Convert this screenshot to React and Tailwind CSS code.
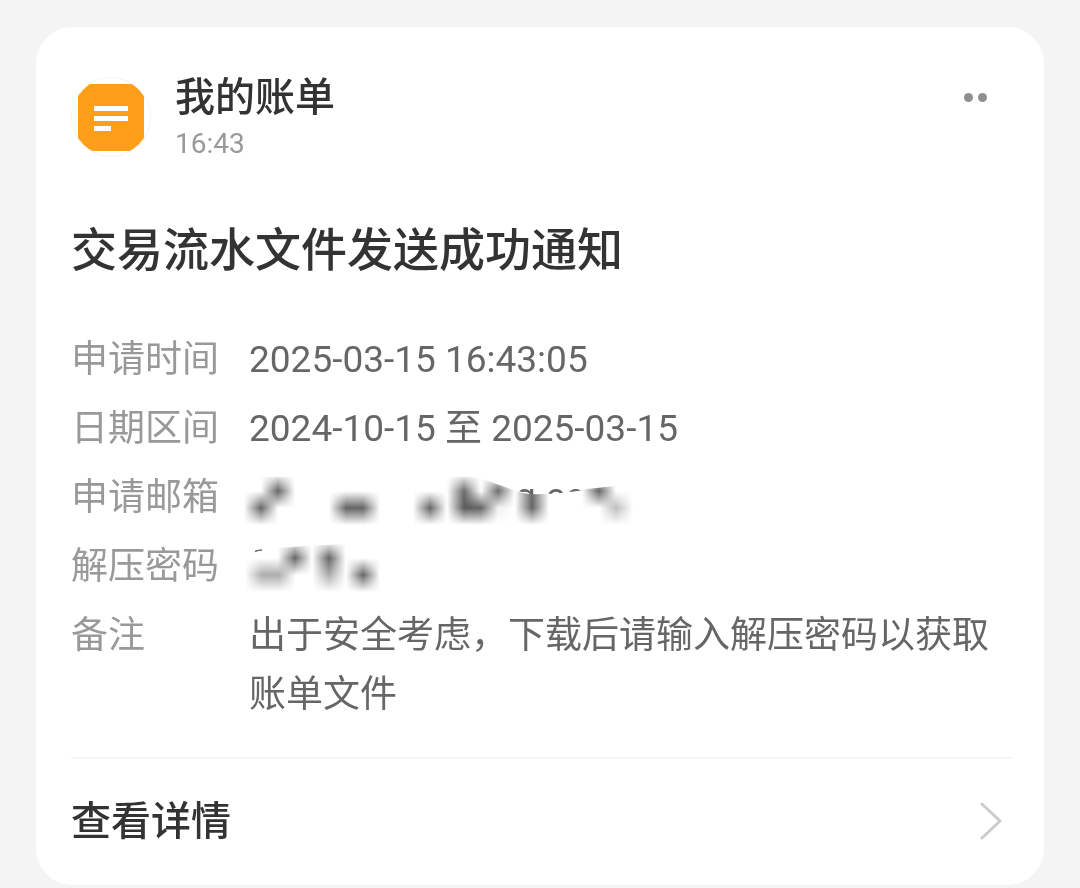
import { useId } from 'react';

const rows = [
  { label: '申请时间', value: '2025-03-15 16:43:05' },
  { label: '日期区间', value: '2024-10-15 至 2025-03-15' },
  { label: '申请邮箱', value: <MaskedEmail /> },
  { label: '解压密码', value: <MaskedPassword /> },
  { label: '备注', value: '出于安全考虑，下载后请输入解压密码以获取账单文件' },
];

function BillIcon() {
  return (
    <svg className="w-20 h-20 shrink-0" viewBox="0 0 80 80" aria-hidden="true">
      <defs>
        <clipPath id="bill-circle">
          <circle cx="40" cy="40" r="39" />
        </clipPath>
      </defs>
      <circle cx="40" cy="40" r="39.5" fill="#fff" stroke="#f3f3f3" />
      <rect x="7" y="7" width="66" height="67" rx="2" fill="#ff9f19" clipPath="url(#bill-circle)" />
      <path d="M23 29h34v5H23zM23 39h34v5H23zM23 49h17v5H23z" fill="#fff" />
    </svg>
  );
}

// each cell is [x, y, opacity] and fades out to its neighbours over one cell (17px)
function Mosaic({ cells, clip }) {
  const id = useId();
  return (
    <>
      <defs>
        <linearGradient id={`${id}-x`}>
          <stop offset="0" stopColor="#5c5c5c" stopOpacity="0" />
          <stop offset="0.5" stopColor="#5c5c5c" />
          <stop offset="1" stopColor="#5c5c5c" stopOpacity="0" />
        </linearGradient>
        <linearGradient id={`${id}-y`} x2="0" y2="1">
          <stop offset="0" stopColor="#fff" stopOpacity="0" />
          <stop offset="0.5" stopColor="#fff" />
          <stop offset="1" stopColor="#fff" stopOpacity="0" />
        </linearGradient>
        <mask id={`${id}-mask`} maskContentUnits="objectBoundingBox">
          <rect width="1" height="1" fill={`url(#${id}-y)`} />
        </mask>
        <clipPath id={`${id}-clip`}>
          <path d={clip} />
        </clipPath>
      </defs>
      <g clipPath={`url(#${id}-clip)`} className="isolate">
        {cells.map(([x, y, opacity]) => (
          <rect
            key={`${x}-${y}`}
            className="mix-blend-plus-lighter"
            x={x - 17}
            y={y - 17}
            width="34"
            height="34"
            fill={`url(#${id}-x)`}
            mask={`url(#${id}-mask)`}
            opacity={opacity}
          />
        ))}
      </g>
    </>
  );
}

function MaskedEmail() {
  const cells = [
    [12, 40, 0.95], [29, 23, 0.95],
    [97, 40, 0.95], [114, 40, 0.95],
    [181, 40, 0.95],
    [215, 23, 0.9], [215, 40, 1], [232, 40, 0.95], [249, 23, 0.9], [249, 40, 0.08],
    [283, 23, 0.9], [283, 40, 0.95],
    [350, 23, 0.95], [367, 40, 0.4],
  ];
  return (
    <svg className="block w-[400px] h-[59px] overflow-visible" viewBox="0 0 400 59" role="img" aria-label="申请邮箱已隐藏">
      <defs>
        <clipPath id="email-top">
          <path d="M262 0H340V21Q310 27 281 26L262 21z" />
        </clipPath>
      </defs>
      <Mosaic
        cells={cells}
        clip="M-6 9H224L236 12L259 20Q270 25 281 26Q310 27 338 21L366 18H386V60H-6z"
      />
      <text x="266" y="41" clipPath="url(#email-top)" fill="#666" fontSize="37" fontFamily="Roboto, sans-serif">
        q.co
      </text>
    </svg>
  );
}

function MaskedPassword() {
  const cells = [
    [13, 38, 0.5], [30, 38, 0.5], [46, 21, 0.95],
    [80, 21, 0.95], [80, 38, 0.5],
    [114, 38, 0.95],
  ];
  return (
    <svg className="block w-[400px] h-[59px] overflow-visible" viewBox="0 0 400 59" role="img" aria-label="解压密码已隐藏">
      <Mosaic cells={cells} clip="M-6 16L30 11Q60 8 100 7H134V60H-6z" />
      <path d="M6 14.5Q9 13 13 13" fill="none" stroke="#666" strokeWidth="1.5" />
    </svg>
  );
}

export default function App() {
  return (
    <div className="min-h-screen bg-[#f4f4f4] px-9 pt-[27px] pb-[3px] font-['Roboto','Noto_Sans_CJK_SC',sans-serif]">
      <article className="rounded-[36px] bg-white pl-[35px] pr-[33px] pt-[50px]">
        <header className="flex items-start">
          <BillIcon />
          <div className="ml-6 flex-1">
            <h2 className="text-[40px] leading-[42px] font-medium text-[#333]">我的账单</h2>
            <time className="mt-[7px] block text-[28px] leading-9 text-[#999]">16:43</time>
          </div>
          <button type="button" aria-label="更多" className="mr-6 flex h-10 items-center gap-[5px] cursor-pointer">
            <span className="w-[9px] h-[9px] rounded-full bg-[#8f8f8f]" />
            <span className="w-[9px] h-[9px] rounded-full bg-[#8f8f8f]" />
          </button>
        </header>

        <h1 className="mt-[54px] text-[46px] leading-[68px] font-medium text-[#333]">
          交易流水文件发送成功通知
        </h1>

        <dl className="mt-[46px] flex flex-col gap-[10px] text-[37px] leading-[59px]">
          {rows.map((row) => (
            <div key={row.label} className="flex">
              <dt className="w-[178px] shrink-0 text-[#999]">{row.label}</dt>
              <dd className="min-w-0 flex-1 text-[#666]">{row.value}</dd>
            </div>
          ))}
        </dl>

        <a href="#detail" className="mt-[33px] flex h-32 items-center justify-between border-t-2 border-[#f6f6f6]">
          <span className="text-[40px] leading-[60px] font-medium text-[#333]">查看详情</span>
          <svg className="mr-2 w-6 h-10" viewBox="0 0 24 40" fill="none" stroke="#ccc" strokeWidth="3" strokeLinecap="round" strokeLinejoin="round" aria-hidden="true">
            <path d="M3 2l18 17L3 36" />
          </svg>
        </a>
      </article>
    </div>
  );
}
